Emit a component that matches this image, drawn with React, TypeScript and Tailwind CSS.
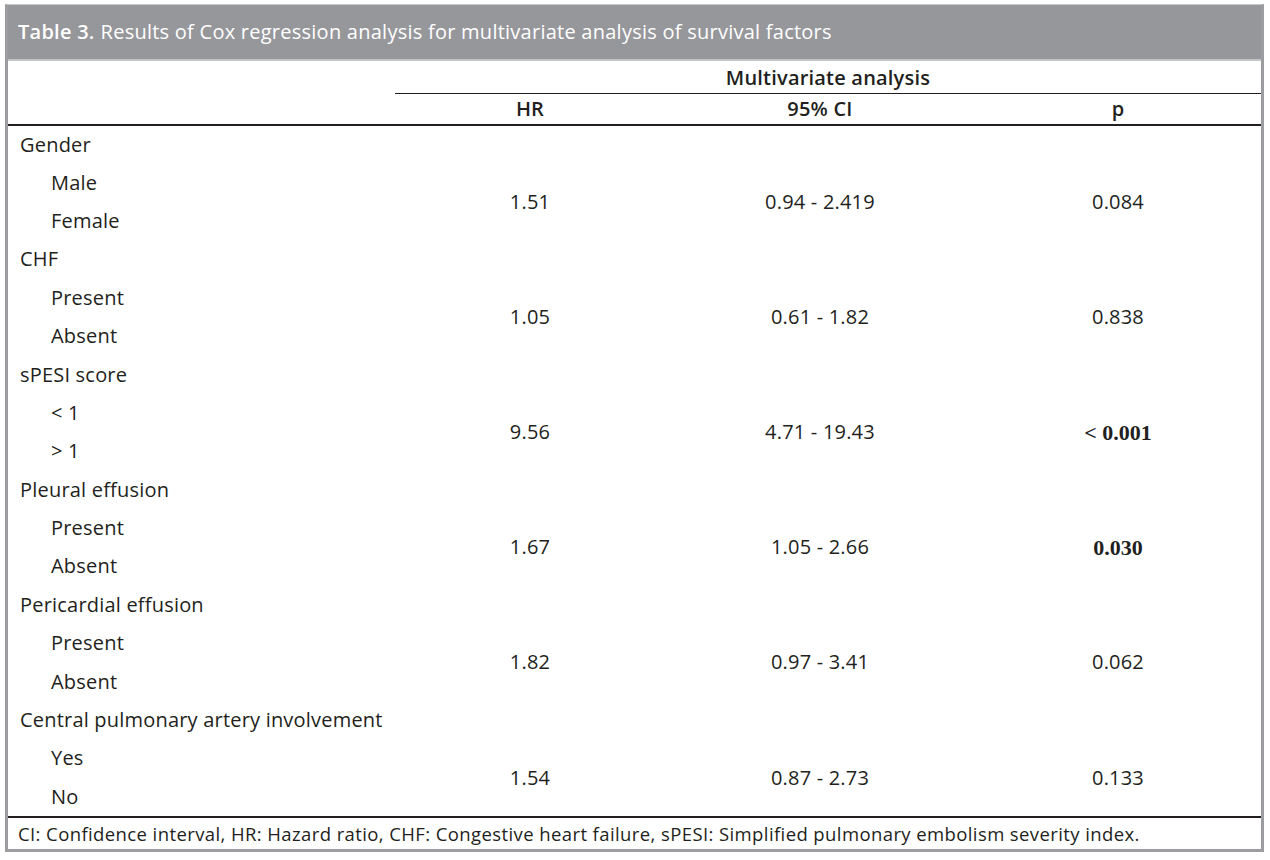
const groups = [
  { label: "Gender", items: ["Male", "Female"], hr: "1.51", ci: "0.94 - 2.419", p: "0.084", bold: false },
  { label: "CHF", items: ["Present", "Absent"], hr: "1.05", ci: "0.61 - 1.82", p: "0.838", bold: false },
  { label: "sPESI score", items: ["< 1", "> 1"], hr: "9.56", ci: "4.71 - 19.43", p: "< 0.001", bold: true },
  { label: "Pleural effusion", items: ["Present", "Absent"], hr: "1.67", ci: "1.05 - 2.66", p: "0.030", bold: true },
  { label: "Pericardial effusion", items: ["Present", "Absent"], hr: "1.82", ci: "0.97 - 3.41", p: "0.062", bold: false },
  { label: "Central pulmonary artery involvement", items: ["Yes", "No"], hr: "1.54", ci: "0.87 - 2.73", p: "0.133", bold: false },
];

export default function App() {
  return (
    <div className="min-h-[860px] bg-white pt-[4px] pl-[5px] font-['Open_Sans',sans-serif] text-[#231f20]">
      <div className="w-[1259px] border-t border-[#c9cacc] border-x-[3px] border-b-[3px] border-x-[#9c9da1] border-b-[#9c9da1]">
        <div className="flex h-[56px] items-center border-b-2 border-[#c4c5c8] bg-[#96979b] pl-[10px] text-[20px] tracking-[0.25px] text-white">
          <span className="font-semibold">Table 3.</span>
          <span className="ml-[6px]">Results of Cox regression analysis for multivariate analysis of survival factors</span>
        </div>
        <table className="w-full border-collapse text-[20px] tracking-[0.2px]">
          <colgroup>
            <col className="w-[387px]" />
            <col className="w-[270px]" />
            <col className="w-[310px]" />
            <col />
          </colgroup>
          <thead>
            <tr className="h-[32px]">
              <th />
              <th colSpan={3} className="border-b border-[#231f20] pt-[2px] text-center font-semibold">
                Multivariate analysis
              </th>
            </tr>
            <tr className="h-[31px]">
              <th className="border-b-2 border-[#231f20]" />
              <th className="border-b-2 border-[#231f20] text-center font-semibold">HR</th>
              <th className="border-b-2 border-[#231f20] text-center font-semibold">95% CI</th>
              <th className="border-b-2 border-[#231f20] text-center font-semibold">p</th>
            </tr>
          </thead>
          <tbody>
            {groups.map((g) => (
              <Group key={g.label} g={g} />
            ))}
          </tbody>
        </table>
        <div className="flex h-[33px] items-center border-t-2 border-[#231f20] pl-[10px] text-[18.5px] tracking-[0.4px]">
          CI: Confidence interval, HR: Hazard ratio, CHF: Congestive heart failure, sPESI: Simplified pulmonary embolism severity index.
        </div>
      </div>
    </div>
  );
}

function Group({ g }: { g: (typeof groups)[number] }) {
  return (
    <>
      <tr className="h-[38.4px]">
        <td className="pl-[12px]">{g.label}</td>
        <td />
        <td />
        <td />
      </tr>
      <tr className="h-[38.4px]">
        <td className="pl-[43px]">{g.items[0]}</td>
        <td rowSpan={2} className="text-center">{g.hr}</td>
        <td rowSpan={2} className="text-center">{g.ci}</td>
        <td
          rowSpan={2}
          className={
            g.bold
              ? "text-center font-['Liberation_Serif',serif] text-[22px] font-bold tracking-normal"
              : "text-center"
          }
        >
          {g.p}
        </td>
      </tr>
      <tr className="h-[38.4px]">
        <td className="pl-[43px]">{g.items[1]}</td>
      </tr>
    </>
  );
}
